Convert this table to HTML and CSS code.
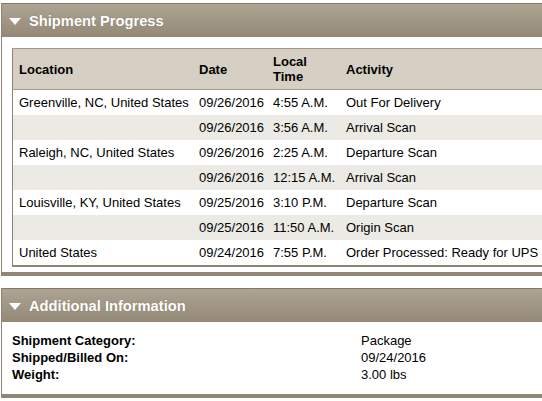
FILE: index.html
```html
<!DOCTYPE html>
<html>
<head>
<meta charset="utf-8">
<link rel="stylesheet" href="styles.css">
</head>
<body>
<div class="page">
  <section class="panel progress">
    <div class="panel-head"><span class="tri"></span><h2>Shipment Progress</h2></div>
    <div class="panel-body">
      <table class="track">
        <thead>
          <tr><th class="c-loc">Location</th><th class="c-date">Date</th><th class="c-time">Local<br>Time</th><th class="c-act">Activity</th></tr>
        </thead>
        <tbody>
          <tr><td>Greenville, NC, United States</td><td>09/26/2016</td><td>4:55 A.M.</td><td>Out For Delivery</td></tr>
          <tr class="alt"><td></td><td>09/26/2016</td><td>3:56 A.M.</td><td>Arrival Scan</td></tr>
          <tr><td>Raleigh, NC, United States</td><td>09/26/2016</td><td>2:25 A.M.</td><td>Departure Scan</td></tr>
          <tr class="alt"><td></td><td>09/26/2016</td><td>12:15 A.M.</td><td>Arrival Scan</td></tr>
          <tr><td>Louisville, KY, United States</td><td>09/25/2016</td><td>3:10 P.M.</td><td>Departure Scan</td></tr>
          <tr class="alt"><td></td><td>09/25/2016</td><td>11:50 A.M.</td><td>Origin Scan</td></tr>
          <tr><td>United States</td><td>09/24/2016</td><td>7:55 P.M.</td><td>Order Processed: Ready for UPS</td></tr>
        </tbody>
      </table>
    </div>
  </section>
  <section class="panel info">
    <div class="panel-head"><span class="tri"></span><h2>Additional Information</h2></div>
    <div class="panel-body details">
      <div class="drow"><span class="dl">Shipment Category:</span><span class="dv">Package</span></div>
      <div class="drow"><span class="dl">Shipped/Billed On:</span><span class="dv">09/24/2016</span></div>
      <div class="drow"><span class="dl">Weight:</span><span class="dv">3.00 lbs</span></div>
    </div>
  </section>
</div>
</body>
</html>
```

FILE: styles.css
```css
html, body {
  margin: 0;
  padding: 0;
  background: #fff;
  overflow: hidden;
}
body {
  font-family: "Liberation Sans", Arial, sans-serif;
  font-size: 13px;
  color: #000;
}
.page {
  padding-top: 3px;
  padding-left: 1px;
  margin-right: -20px;
}
.panel {
  border-left: 1px solid #8f8473;
  border-bottom: 4px solid #918676;
}
.panel.info {
  margin-top: 12px;
}
.panel-head {
  height: 33px;
  border-top: 1px solid #857a6a;
  background: linear-gradient(#aea493, #948977);
  display: flex;
  align-items: center;
  padding-left: 7px;
}
.tri {
  width: 0;
  height: 0;
  border-left: 6px solid transparent;
  border-right: 6px solid transparent;
  border-top: 7px solid #fff;
  margin-right: 8px;
  margin-top: 1px;
}
.panel-head h2 {
  margin: 0;
  font-size: 14.7px;
  font-weight: bold;
  color: #fff;
  text-shadow: 0 0 1px rgba(90, 80, 65, 0.5);
}
.panel-body {
  background: #fff;
}
.progress .panel-body {
  padding: 11px 0 5px 10px;
}
.track {
  border-collapse: collapse;
  width: 100%;
  border-left: 1px solid #8f8473;
  border-bottom: 2px solid #8f8473;
}
.track th {
  background: #d6cfc4;
  border-top: 1px solid #a39886;
  border-bottom: 1px solid #a39886;
  text-align: left;
  font-weight: bold;
  height: 40px;
  padding: 0 0 0 6px;
  line-height: 15px;
  vertical-align: middle;
}
.track td {
  height: 25px;
  padding: 0 0 0 6px;
  white-space: nowrap;
  vertical-align: middle;
}
.track tr.alt td {
  background: #ebeae5;
}
.c-loc { width: 174px; }
.c-date { width: 68px; }
.c-time { width: 67px; }
.details {
  padding: 10px 0 11px 10px;
}
.drow {
  display: flex;
  line-height: 17px;
}
.dl {
  font-weight: bold;
  width: 349px;
}
```
